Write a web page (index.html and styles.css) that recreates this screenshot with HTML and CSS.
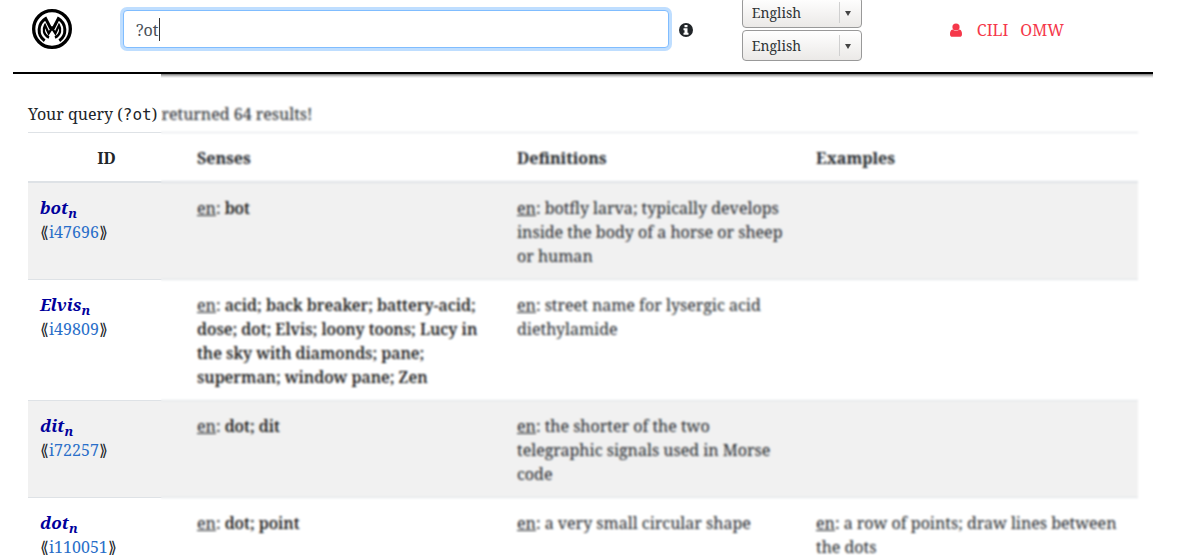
FILE: index.html
```html
<!DOCTYPE html>
<html lang="en">
<head>
<meta charset="utf-8">
<title>Open Multilingual Wordnet</title>
<link rel="stylesheet" href="styles.css">
</head>
<body>
<div class="page">
  <header class="topbar">
    <a class="logo" href="#" aria-label="Home">
      <svg viewBox="0 0 120 120" width="40" height="40" fill="none" stroke="#000" stroke-width="9">
        <circle cx="60" cy="60" r="55" stroke-width="10"/>
        <path d="M38 95C14 79 17 43 41 29L55 56H65L79 29C103 43 106 79 82 95"/>
        <path d="M51 86C33 77 33 60 39 49L50 73L57 62H63L70 73L81 49C87 60 87 77 69 86" stroke-width="7"/>
      </svg>
    </a>
    <div class="search">
      <input class="search-input" type="text" value="?ot" aria-label="Search">
      <span class="caret"></span>
    </div>
    <svg class="info" viewBox="0 0 14 14" width="14" height="14" role="img" aria-label="Help">
      <circle cx="7" cy="7" r="7" fill="#212529"/>
      <path d="M5.500 2h3v2.300h-3zM4.500 5.300h4v4.500h1v1.900h-5V9.800h1V7.200h-1z" fill="#fff"/>
    </svg>
    <div class="languages">
      <div class="picker"><select aria-label="Search language"><option>English</option></select></div>
      <div class="picker"><select aria-label="Display language"><option>English</option></select></div>
    </div>
    <nav class="links">
      <a href="#" aria-label="Log in"><svg viewBox="0 0 12 14" width="12" height="14" fill="#f5384a"><circle cx="6" cy="4" r="3.6"/><path d="M2.6 6.6C.6 7 0 9 0 11.200C0 13 1 13.800 2.300 13.800H9.700C11 13.800 12 13 12 11.200C12 9 11.400 7 9.400 6.600C7.500 8.500 4.500 8.500 2.600 6.600Z"/></svg></a>
      <a href="#">CILI</a>
      <a href="#">OMW</a>
    </nav>
  </header>
  <main class="results">
    <p class="summary">Your query (<code>?ot</code>) returned 64 results!</p>
    <table class="synsets">
      <thead>
        <tr><th class="col-id">ID</th><th class="col-senses">Senses</th><th class="col-defs">Definitions</th><th>Examples</th></tr>
      </thead>
      <tbody>
        <tr>
          <td><span class="lemma">bot<sub>n</sub></span><br><span class="ili">⟪<a href="#">i47696</a>⟫</span></td>
          <td class="senses"><u>en</u>: <b>bot</b></td>
          <td><u>en</u>: botfly larva; typically develops inside the body of a horse or sheep or human</td>
          <td></td>
        </tr>
        <tr>
          <td><span class="lemma">Elvis<sub>n</sub></span><br><span class="ili">⟪<a href="#">i49809</a>⟫</span></td>
          <td class="senses"><u>en</u>: <b>acid; back breaker; battery-acid; dose; dot; Elvis; loony toons; Lucy in the sky with diamonds; pane; superman; window pane; Zen</b></td>
          <td><u>en</u>: street name for lysergic acid diethylamide</td>
          <td></td>
        </tr>
        <tr>
          <td><span class="lemma">dit<sub>n</sub></span><br><span class="ili">⟪<a href="#">i72257</a>⟫</span></td>
          <td class="senses"><u>en</u>: <b>dot; dit</b></td>
          <td><u>en</u>: the shorter of the two telegraphic signals used in Morse code</td>
          <td></td>
        </tr>
        <tr>
          <td><span class="lemma">dot<sub>n</sub></span><br><span class="ili">⟪<a href="#">i110051</a>⟫</span></td>
          <td class="senses"><u>en</u>: <b>dot; point</b></td>
          <td><u>en</u>: a very small circular shape</td>
          <td><u>en</u>: a row of points; draw lines between the dots</td>
        </tr>
      </tbody>
    </table>
    <div class="veil"></div>
  </main>
</div>
</body>
</html>
```
FILE: styles.css
```css
* { box-sizing: border-box; }
body {
  margin: 0;
  background: #fff;
  color: #212529;
  font: 16px/24px "Noto Serif Condensed", "Noto Serif", "DejaVu Serif Condensed", "Liberation Serif", serif;
}
a { color: #2a6fc9; text-decoration: none; }
.page { padding: 0 30px 0 13px; }

.topbar {
  display: flex;
  align-items: center;
  height: 74px;
  padding: 0 89px 14px 19px;
  border-bottom: 2px solid #000;
}
.logo { display: flex; }
.search { position: relative; flex: 1; margin: 0 10px 0 51px; }
.search-input {
  display: block;
  width: 100%;
  height: 38px;
  padding: 7px 12px 5px;
  border: 1px solid #80bdff;
  border-radius: 4px;
  outline: none;
  box-shadow: 0 0 0 3px #bfdeff;
  background: #fff;
  color: #495057;
  font: inherit;
}
.caret {
  position: absolute;
  top: 8px;
  left: 36px;
  width: 1px;
  height: 23px;
  background: #333;
}
.info { margin: 2px 49px 0 0; }
.languages { display: grid; gap: 2px; width: 120px; margin-right: 88px; }
.picker { position: relative; }
.picker select {
  display: block;
  width: 100%;
  height: 31px;
  padding: 1px 9px 0;
  appearance: none;
  border: 1px solid #999;
  border-radius: 4px;
  background: linear-gradient(#fff, #ebe9e7);
  color: #2e3436;
  font: inherit;
  font-size: 14px;
}
.picker::before {
  content: "";
  position: absolute;
  top: 5px;
  right: 22px;
  width: 1px;
  height: 21px;
  background: #d0d0d0;
}
.picker::after {
  content: "";
  position: absolute;
  top: 14px;
  right: 11px;
  border: 3px solid transparent;
  border-top: 5px solid #444;
  border-bottom: 0;
}
.links { display: flex; align-items: center; gap: 12px; padding-top: 2px; }
.links a { color: #f5384a; }
.links a:first-child { display: flex; margin-right: 3px; }

.results { position: relative; padding: 28px 15px 0; }
.summary { margin: 0; padding-bottom: 5px; }
code { font-family: "DejaVu Sans Mono", monospace; font-size: 16px; }
.synsets { width: 100%; table-layout: fixed; border-collapse: collapse; }
th, td { padding: 13px 12px 11px; border-top: 1px solid #dee2e6; text-align: left; vertical-align: top; }
th { border-bottom: 2px solid #dee2e6; }
.col-id { width: 157px; text-align: center; }
.col-senses { width: 320px; }
.col-defs { width: 299px; }
tbody tr:nth-child(odd) { background: #f1f1f1; }
.lemma { color: #00009c; font-size: 17px; font-style: italic; font-weight: bold; }
.senses b { color: #000; font-weight: 500; }
sub { position: relative; bottom: -4px; font-size: 13px; line-height: 0; vertical-align: baseline; }
.veil {
  position: absolute;
  inset: 0 0 0 148px;
  background: linear-gradient(#777, #ccc 2px, transparent 4px);
  backdrop-filter: blur(1px);
}
```
